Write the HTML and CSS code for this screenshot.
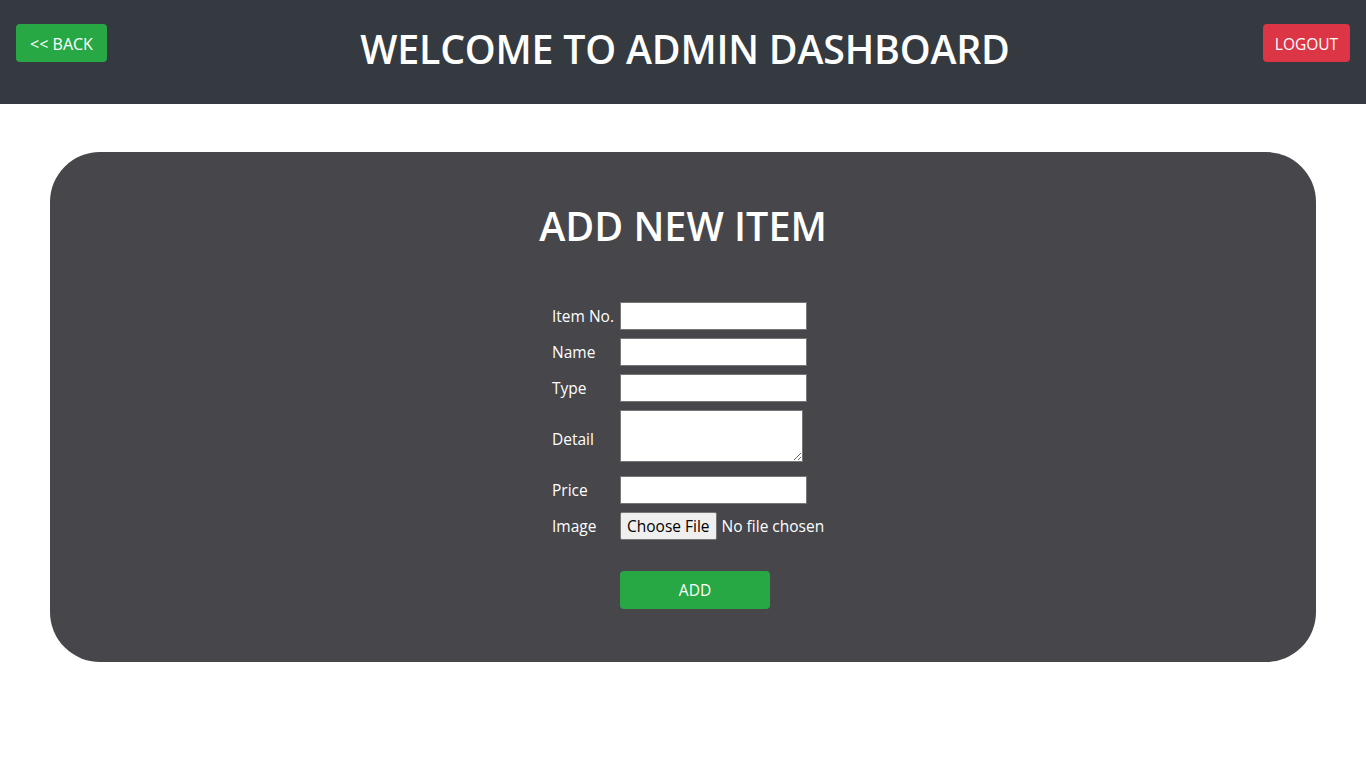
FILE: index.html
```html
<!DOCTYPE html>
<html lang="en">
<head>
<meta charset="utf-8">
<title>Admin Dashboard</title>
<link rel="stylesheet" href="styles.css">
</head>
<body>
<header class="topbar">
  <button class="btn btn-green btn-back">&lt;&lt; BACK</button>
  <h1 class="title">WELCOME TO ADMIN DASHBOARD</h1>
  <button class="btn btn-red btn-logout">LOGOUT</button>
</header>
<main class="card">
  <h2 class="card-title">ADD NEW ITEM</h2>
  <form class="item-form">
    <label class="lbl">Item No.</label><input class="field" type="text">
    <label class="lbl">Name</label><input class="field" type="text">
    <label class="lbl">Type</label><input class="field" type="text">
    <label class="lbl">Detail</label><textarea class="area"></textarea>
    <label class="lbl">Price</label><input class="field" type="text">
    <label class="lbl">Image</label><input class="file" type="file">
    <span></span><button type="button" class="btn btn-green btn-add">ADD</button>
  </form>
</main>
</body>
</html>
```
FILE: styles.css
```css
* { box-sizing: border-box; }
body {
  margin: 0;
  font-family: "Open Sans", "Noto Sans", sans-serif;
  background: #fff;
  color: #fff;
}
.topbar {
  background: #343a40;
  height: 104px;
  padding: 24px 16px 0;
  display: flex;
  justify-content: space-between;
  align-items: flex-start;
}
.title {
  margin: 1px 0 0;
  font-size: 39.3px;
  line-height: 48px;
  font-weight: 600;
  letter-spacing: -0.2px;
}
.btn {
  font-family: inherit;
  color: #fff;
  border: none;
  border-radius: 4px;
  font-size: 15.5px;
  height: 38px;
  padding: 0;
  cursor: pointer;
}
.btn-green { background: #28a745; }
.btn-red { background: #dc3545; }
.btn-back { width: 91px; font-size: 16px; padding-top: 1px; }
.btn-logout { width: 87px; font-size: 15.5px; padding-top: 1px; }
.card {
  margin: 48px 50px 0;
  height: 510px;
  background: #46464b;
  border-radius: 50px;
  padding-top: 50px;
  display: flex;
  flex-direction: column;
  align-items: center;
}
.card-title {
  margin: 0;
  font-size: 39.5px;
  line-height: 48px;
  font-weight: 600;
}
.item-form {
  margin-top: 52px;
  margin-left: 12px;
  display: grid;
  grid-template-columns: 68px 206px;
  row-gap: 8px;
  align-items: center;
  font-size: 15.5px;
}
.field {
  width: 187px;
  height: 28px;
  border: 1px solid #767676;
  background: #fff;
}
.area {
  width: 183px;
  height: 52px;
  border: 1px solid #767676;
  margin-bottom: 6px;
}
.file {
  width: 230px;
  color: #fff;
  font-family: inherit;
  font-size: 15.5px;
  height: 28px;
}
.file::file-selector-button {
  font-family: inherit;
  font-size: 15.5px;
  height: 28px;
  padding: 0 6px;
  margin-right: 5px;
  background: #efefef;
  border: 1px solid #767676;
  border-radius: 2px;
  color: #000;
}
.btn-add {
  width: 150px;
  margin-top: 23px;
}
```
